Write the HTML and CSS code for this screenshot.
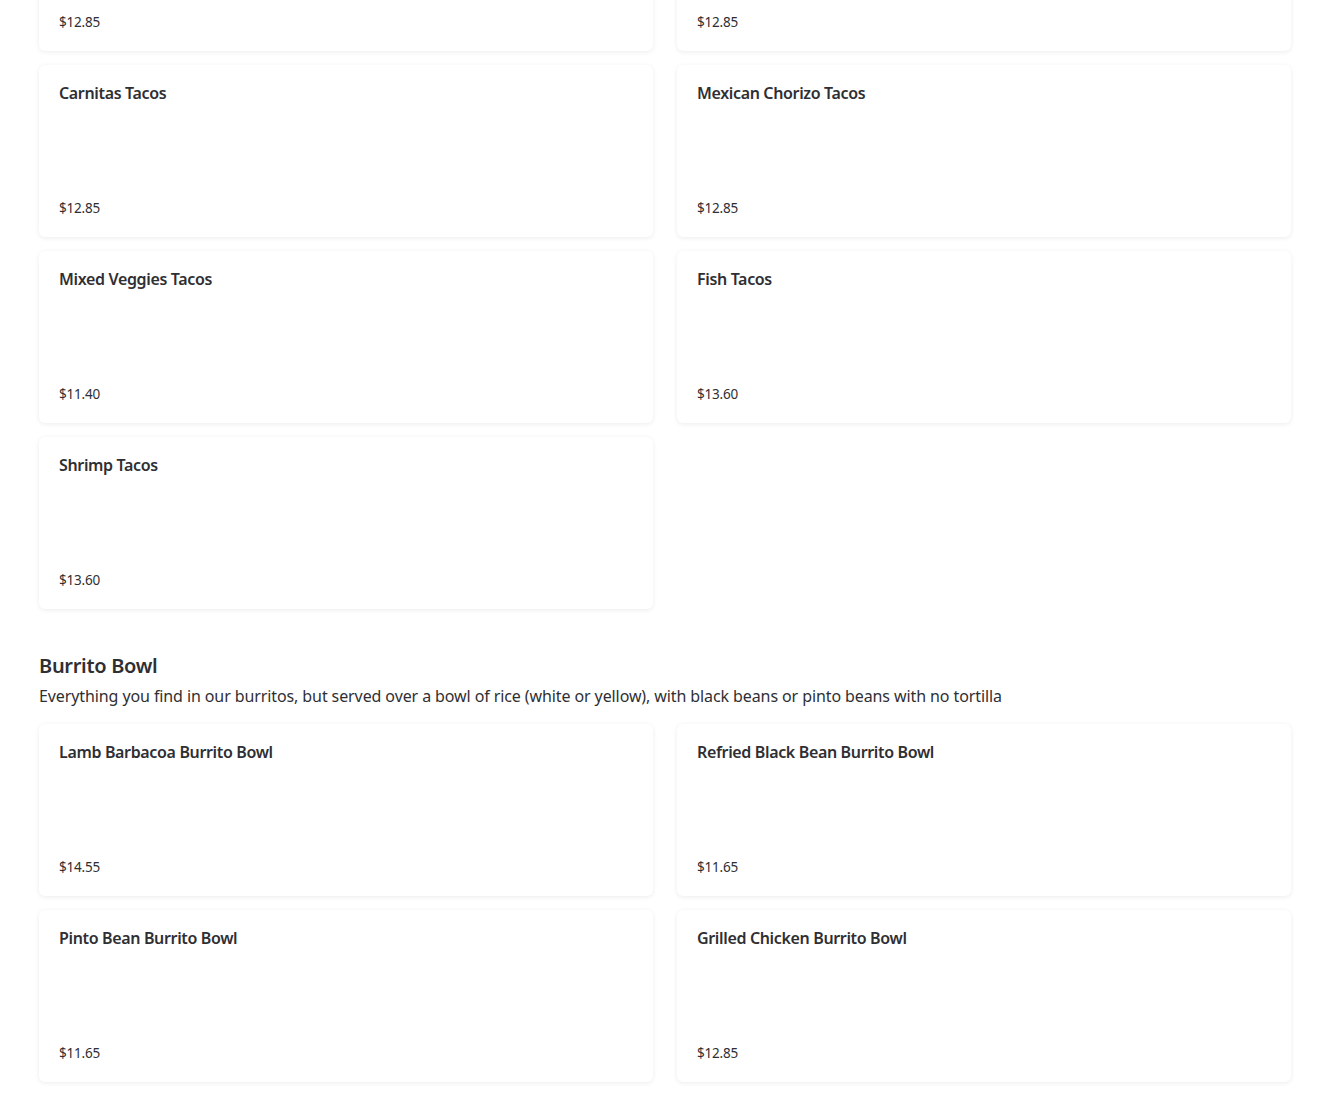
FILE: index.html
```html
<!DOCTYPE html>
<html lang="en">
<head>
    <meta charset="UTF-8">
    <meta name="viewport" content="width=device-width, initial-scale=1.0">
    <title>Menu</title>
    <link rel="stylesheet" href="styles.css">
</head>
<body>
    <div class="menu">
        <section class="menu-section">
            <div class="item-grid">
                <div class="item-card">
                    <div class="item-price">$12.85</div>
                </div>
                <div class="item-card">
                    <div class="item-price">$12.85</div>
                </div>
                <div class="item-card">
                    <div class="item-name">Carnitas Tacos</div>
                    <div class="item-price">$12.85</div>
                </div>
                <div class="item-card">
                    <div class="item-name">Mexican Chorizo Tacos</div>
                    <div class="item-price">$12.85</div>
                </div>
                <div class="item-card">
                    <div class="item-name">Mixed Veggies Tacos</div>
                    <div class="item-price">$11.40</div>
                </div>
                <div class="item-card">
                    <div class="item-name">Fish Tacos</div>
                    <div class="item-price">$13.60</div>
                </div>
                <div class="item-card">
                    <div class="item-name">Shrimp Tacos</div>
                    <div class="item-price">$13.60</div>
                </div>
            </div>
        </section>

        <section class="menu-section">
            <h2 class="section-title">Burrito Bowl</h2>
            <p class="section-desc">Everything you find in our burritos, but served over a bowl of rice (white or yellow), with black beans or pinto beans with no tortilla</p>
            <div class="item-grid">
                <div class="item-card">
                    <div class="item-name">Lamb Barbacoa Burrito Bowl</div>
                    <div class="item-price">$14.55</div>
                </div>
                <div class="item-card">
                    <div class="item-name">Refried Black Bean Burrito Bowl</div>
                    <div class="item-price">$11.65</div>
                </div>
                <div class="item-card">
                    <div class="item-name">Pinto Bean Burrito Bowl</div>
                    <div class="item-price">$11.65</div>
                </div>
                <div class="item-card">
                    <div class="item-name">Grilled Chicken Burrito Bowl</div>
                    <div class="item-price">$12.85</div>
                </div>
            </div>
        </section>
    </div>
</body>
</html>
```

FILE: styles.css
```css
body {
    margin: 0;
    background-color: #fff;
    font-family: "Noto Sans", Arial, sans-serif;
    color: #2f2f33;
}
.menu {
    padding: 0 39px;
    /* page is shown scrolled part way down the menu */
    margin-top: -121px;
}
.menu-section {
    margin-bottom: 42px;
}
.section-title {
    margin: 0;
    font-size: 20px;
    line-height: 29px;
    font-weight: 600;
    letter-spacing: -0.3px;
}
.section-desc {
    margin: 4px 0 16px;
    font-size: 16px;
    line-height: 24px;
    letter-spacing: -0.1px;
}
.item-grid {
    display: grid;
    grid-template-columns: 1fr 1fr;
    column-gap: 24px;
    row-gap: 14px;
}
.item-card {
    height: 172px;
    box-sizing: border-box;
    padding: 16px 20px 19px;
    display: flex;
    flex-direction: column;
    justify-content: space-between;
    background-color: #fff;
    border-radius: 6px;
    box-shadow: 0 1px 5px rgba(0,0,0,0.08);
}
.item-card .item-price:only-child {
    margin-top: auto;
}
.item-name {
    font-size: 16px;
    line-height: 24px;
    font-weight: 600;
    letter-spacing: -0.35px;
}
.item-price {
    font-size: 13.5px;
    line-height: 20px;
    letter-spacing: -0.2px;
}
```
